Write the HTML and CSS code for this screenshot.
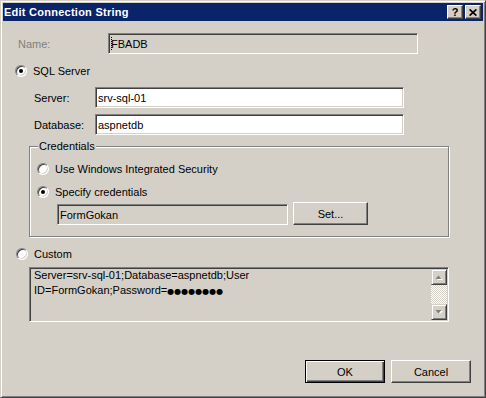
FILE: index.html
```html
<!doctype html>
<html>
<head>
  <title>Edit Connection String</title>
  <link rel="stylesheet" href="styles.css">
</head>
<body>

<div class="window">
  <div class="titlebar">
    <span class="title">Edit Connection String</span>
    <div class="caption-btns">
      <span class="cap-btn cap-help">?</span>
      <span class="cap-btn">
        <svg width="8" height="7" viewBox="0 0 8 7">
          <path d="M0.6 0.4 L7.4 6.6 M7.4 0.4 L0.6 6.6" stroke="#000" stroke-width="1.7" fill="none"/>
        </svg>
      </span>
    </div>
  </div>

  <div class="content">
    <!-- name -->
    <div class="row name-row">
      <span class="label disabled name-label">Name:</span>
      <div class="textbox readonly name-box"><span class="caret"></span>FBADB</div>
    </div>

    <!-- sql server -->
    <div class="radio-row sql-row"><span class="radio checked"></span>SQL Server</div>

    <div class="row field-row server-row">
      <span class="label field-label">Server:</span>
      <div class="textbox field-box">srv-sql-01</div>
    </div>
    <div class="row field-row db-row">
      <span class="label field-label">Database:</span>
      <div class="textbox field-box">aspnetdb</div>
    </div>

    <div class="group">
      <span class="group-title">Credentials</span>
      <div class="radio-row first-opt"><span class="radio"></span>Use Windows Integrated Security</div>
      <div class="radio-row second-opt"><span class="radio checked"></span>Specify credentials</div>
      <div class="row cred-row">
        <div class="textbox readonly cred-box">FormGokan</div>
        <span class="btn set-btn">Set...</span>
      </div>
    </div>

    <!-- custom -->
    <div class="radio-row custom-row"><span class="radio"></span>Custom</div>

    <div class="custom-box">
      <div class="custom-text">Server=srv-sql-01;Database=aspnetdb;User<br>ID=FormGokan;Password=<span class="dots">●●●●●●●●</span></div>
      <div class="scrollbar">
        <span class="sb-btn">
          <svg width="8" height="5" viewBox="0 0 8 5">
            <polygon points="1,4 4,1 7,4" fill="#fff" transform="translate(1,1)"/>
            <polygon points="0.5,4 3.5,0.5 6.5,4" fill="#808080"/>
          </svg>
        </span>
        <span class="sb-track"></span>
        <span class="sb-btn">
          <svg width="8" height="5" viewBox="0 0 8 5">
            <polygon points="1,0 7,0 4,3" fill="#fff" transform="translate(1,1)"/>
            <polygon points="0.5,0 6.5,0 3.5,3.5" fill="#808080"/>
          </svg>
        </span>
      </div>
    </div>

    <div class="footer">
      <span class="btn btn-default">OK</span>
      <span class="btn">Cancel</span>
    </div>
  </div>
</div>

</body>
</html>
```

FILE: styles.css
```css
body {
  margin: 0;
  background: #d4d0c8;
  font-family: 'Liberation Sans', Arial, sans-serif;
  font-size: 11px;
  color: #000;
}

.window {
  width: 486px;
  height: 398px;
  box-sizing: border-box;
  border: 1px solid;
  border-color: #d4d0c8 #404040 #404040 #d4d0c8;
  box-shadow: inset 1px 1px #fff, inset -1px -1px #808080;
  padding: 2px;
  background: #d4d0c8;
  display: flex;
  flex-direction: column;
}

.titlebar {
  height: 18px;
  background: #0a246a;
  display: flex;
  align-items: center;
  justify-content: space-between;
  padding: 0 2px 0 1px;
}

.title {
  color: #fff;
  font-weight: bold;
  font-size: 11px;
  letter-spacing: 0.25px;
}

.caption-btns {
  display: flex;
  gap: 2px;
}

.cap-btn {
  width: 16px;
  height: 14px;
  box-sizing: border-box;
  background: #d4d0c8;
  border: 1px solid;
  border-color: #fff #404040 #404040 #fff;
  box-shadow: inset -1px -1px #808080;
  display: flex;
  align-items: center;
  justify-content: center;
}

.cap-help {
  font-weight: bold;
  font-size: 11px;
  line-height: 12px;
}

.content {
  flex: 1;
  display: flex;
  flex-direction: column;
  padding-left: 12px;
}

.row {
  display: flex;
  align-items: center;
}

.label.disabled {
  color: #808080;
}

.name-row {
  margin-top: 12px;
  margin-left: 3px;
}

.name-label {
  width: 90px;
}

.textbox {
  height: 21px;
  box-sizing: border-box;
  border: 1px solid;
  border-color: #808080 #fff #fff #808080;
  box-shadow: inset 1px 1px #404040, inset -1px -1px #d4d0c8;
  background: #fff;
  padding-left: 2px;
  display: flex;
  align-items: center;
}

.textbox.readonly {
  background: #d4d0c8;
}

.caret {
  width: 1px;
  height: 13px;
  margin-right: -1px;
  background: repeating-linear-gradient(#000 0 1px, transparent 1px 2px);
}

.name-box {
  width: 310px;
}

.radio-row {
  display: flex;
  align-items: center;
  height: 13px;
  gap: 6px;
}

.radio {
  width: 12px;
  height: 12px;
  flex: none;
  box-sizing: border-box;
  border-radius: 50%;
  border: 1px solid;
  border-color: #808080 #fff #fff #808080;
  box-shadow: inset 1px 1px #404040, inset -1px -1px #d4d0c8;
  background: #fff;
  display: flex;
  align-items: center;
  justify-content: center;
}

.radio.checked::after {
  content: "";
  width: 4px;
  height: 4px;
  border-radius: 50%;
  background: #000;
}

.sql-row {
  margin-top: 10px;
}

.field-row {
  padding-left: 19px;
}

.server-row {
  margin-top: 10px;
}

.db-row {
  margin-top: 6px;
}

.field-label {
  width: 61px;
}

.field-box {
  width: 309px;
}

/* credentials group */
.group {
  width: 420px;
  box-sizing: border-box;
  margin: 11px 0 0 14px;
  border: 1px solid #808080;
  box-shadow: inset 1px 1px #fff, 1px 1px 0 #fff;
  display: flex;
  flex-direction: column;
  align-items: flex-start;
  padding: 0 0 11px 7px;
}

.group-title {
  margin: -7px 0 0 1px;
  padding: 0 1px;
  line-height: 13px;
  background: #d4d0c8;
}

.first-opt {
  margin-top: 9px;
}

.second-opt {
  margin-top: 10px;
}

.cred-row {
  margin: 4px 0 0 20px;
  align-items: flex-end;
  gap: 5px;
}

.cred-box {
  width: 231px;
}

.btn {
  height: 23px;
  box-sizing: border-box;
  background: #d4d0c8;
  border: 1px solid;
  border-color: #fff #404040 #404040 #fff;
  box-shadow: inset -1px -1px #808080;
  display: flex;
  align-items: center;
  justify-content: center;
}

.set-btn {
  width: 75px;
}

.custom-row {
  margin: 10px 0 0 1px;
}

.custom-box {
  width: 420px;
  height: 55px;
  box-sizing: border-box;
  margin: 7px 0 0 14px;
  border: 1px solid;
  border-color: #808080 #fff #fff #808080;
  box-shadow: inset 1px 1px #404040, inset -1px -1px #d4d0c8;
  background: #d4d0c8;
  padding: 1px;
  display: flex;
}

.custom-text {
  flex: 1;
  padding: 0 3px;
  margin-top: -1px;
  line-height: 15px;
}

.dots {
  font-family: 'DejaVu Sans', sans-serif;
  font-size: 8px;
}

.scrollbar {
  width: 16px;
  display: flex;
  flex-direction: column;
}

.sb-btn {
  width: 16px;
  height: 16px;
  box-sizing: border-box;
  background: #d4d0c8;
  border: 1px solid;
  border-color: #d4d0c8 #404040 #404040 #d4d0c8;
  box-shadow: inset 1px 1px #fff, inset -1px -1px #808080;
  display: flex;
  align-items: center;
  justify-content: center;
}

.sb-track {
  flex: 1;
  background-image: repeating-conic-gradient(#fff 0 25%, #d4d0c8 0 50%);
  background-size: 2px 2px;
}

.footer {
  margin-top: auto;
  padding: 0 12px 12px 0;
  display: flex;
  justify-content: flex-end;
  gap: 6px;
}

.footer .btn {
  width: 80px;
}

.btn-default {
  border-color: #000;
  box-shadow: inset 1px 1px #fff, inset -1px -1px #404040, inset -2px -2px #808080;
}
```
